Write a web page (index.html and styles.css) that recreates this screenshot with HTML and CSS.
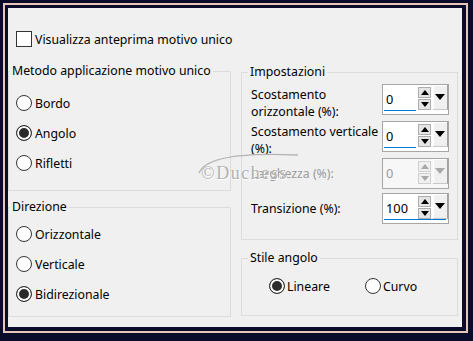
FILE: index.html
```html
<!DOCTYPE html>
<html lang="it">
<head>
    <meta charset="UTF-8">
    <title>Motivo unico</title>
    <link rel="stylesheet" href="styles.css">
</head>
<body>
    <div class="frame">
        <div class="frame-mid">
            <div class="dialog">
                <label class="check-row">
                    <span class="checkbox"></span>
                    Visualizza anteprima motivo unico
                </label>

                <div class="panes">
                    <div class="column">
                        <fieldset class="group">
                            <legend>Metodo applicazione motivo unico</legend>
                            <div class="group-body body-method">
                                <div class="radio-row"><span class="radio"></span>Bordo</div>
                                <div class="radio-row"><span class="radio checked"></span>Angolo</div>
                                <div class="radio-row"><span class="radio"></span>Rifletti</div>
                            </div>
                        </fieldset>

                        <fieldset class="group">
                            <legend>Direzione</legend>
                            <div class="group-body body-direction">
                                <div class="radio-row"><span class="radio"></span>Orizzontale</div>
                                <div class="radio-row"><span class="radio"></span>Verticale</div>
                                <div class="radio-row"><span class="radio checked"></span>Bidirezionale</div>
                            </div>
                        </fieldset>
                    </div>

                    <div class="column column-right">
                        <fieldset class="group">
                            <legend>Impostazioni</legend>
                            <div class="group-body body-settings">

                                <div class="setting">
                                    <div class="setting-label two-lines">Scostamento<br>orizzontale (%):</div>
                                    <div class="spin">
                                        <div class="spin-top">
                                            <div class="spin-field">0</div>
                                            <div class="spin-buttons">
                                                <span class="spin-btn"><span class="tri-up"></span></span>
                                                <span class="spin-btn"><span class="tri-down"></span></span>
                                            </div>
                                            <div class="spin-drop"><span class="tri-drop"></span></div>
                                        </div>
                                        <div class="spin-bar"></div>
                                    </div>
                                </div>

                                <div class="setting">
                                    <div class="setting-label two-lines">Scostamento verticale<br>(%):</div>
                                    <div class="spin">
                                        <div class="spin-top">
                                            <div class="spin-field">0</div>
                                            <div class="spin-buttons">
                                                <span class="spin-btn"><span class="tri-up"></span></span>
                                                <span class="spin-btn"><span class="tri-down"></span></span>
                                            </div>
                                            <div class="spin-drop"><span class="tri-drop"></span></div>
                                        </div>
                                        <div class="spin-bar"></div>
                                    </div>
                                </div>

                                <div class="setting disabled">
                                    <div class="setting-label">Larghezza (%):</div>
                                    <div class="spin">
                                        <div class="spin-top">
                                            <div class="spin-field">0</div>
                                            <div class="spin-buttons">
                                                <span class="spin-btn"><span class="tri-up"></span></span>
                                                <span class="spin-btn"><span class="tri-down"></span></span>
                                            </div>
                                            <div class="spin-drop"><span class="tri-drop"></span></div>
                                        </div>
                                        <div class="spin-bar"></div>
                                    </div>
                                </div>

                                <div class="setting setting-last">
                                    <div class="setting-label">Transizione (%):</div>
                                    <div class="spin">
                                        <div class="spin-top">
                                            <div class="spin-field">100</div>
                                            <div class="spin-buttons">
                                                <span class="spin-btn"><span class="tri-up"></span></span>
                                                <span class="spin-btn"><span class="tri-down"></span></span>
                                            </div>
                                            <div class="spin-drop"><span class="tri-drop"></span></div>
                                        </div>
                                        <div class="spin-bar full"></div>
                                    </div>
                                </div>
                            </div>
                        </fieldset>

                        <fieldset class="group">
                            <legend>Stile angolo</legend>
                            <div class="group-body body-corner">
                                <div class="radio-row option-first"><span class="radio checked"></span>Lineare</div>
                                <div class="radio-row"><span class="radio"></span>Curvo</div>
                            </div>
                        </fieldset>
                    </div>
                </div>

                <div class="watermark">
                    <svg width="104" height="26" viewBox="0 0 104 26">
                        <path d="M3 24 C 9 9, 40 3, 102 6" fill="none" stroke="#b4b4b4" stroke-width="1.3"/>
                    </svg>
                    <span class="watermark-text">©Duchess</span>
                </div>
            </div>
        </div>
    </div>
</body>
</html>
```

FILE: styles.css
```css
body {
    margin: 0;
    font-family: "Noto Sans", sans-serif;
    font-size: 12.3px;
    color: #000;
}

/* outer decorative frame */
.frame {
    width: 473px;
    height: 341px;
    box-sizing: border-box;
    background-color: #0b0b2c;
    padding: 3px 5px 8px 3px;
}

.frame-mid {
    height: 100%;
    box-sizing: border-box;
    background-color: #e6c6b6;
    padding: 2px;
}

.dialog {
    position: relative;
    height: 100%;
    box-sizing: border-box;
    background-color: #f0f0f0;
    border: solid #0b0b2c;
    border-width: 3px 4px 4px 3px;
    overflow: hidden;
}

.check-row {
    display: flex;
    align-items: center;
    margin: 23px 0 0 8px;
    height: 16px;
}

.checkbox {
    width: 16px;
    height: 16px;
    box-sizing: border-box;
    border: 1px solid #333;
    background-color: #fff;
    margin-right: 3px;
}

.panes {
    display: grid;
    grid-template-columns: 223px 217px;
    column-gap: 10px;
    margin-top: 15px;
}

.column {
    display: flex;
    flex-direction: column;
    gap: 7px;
}

.column-right {
    margin-top: 1px;
    gap: 9px;
}

/* group boxes */
.group {
    margin: 0;
    min-width: 0;
    border: 1px solid #dcdcdc;
    padding: 0;
}

.group legend {
    padding: 0 2px;
    margin-left: 1px;
    line-height: 18px;
}

.column-right .group legend {
    margin-left: 6px;
}

.body-method {
    padding: 8px 0 12px 7px;
}

.body-direction {
    padding: 3px 0 7px 7px;
}

.body-settings {
    padding: 3px 8px 15px 9px;
}

.body-corner {
    display: flex;
    padding: 9px 0 19px 27px;
}

/* radio buttons */
.radio-row {
    display: flex;
    align-items: center;
    height: 30px;
    white-space: nowrap;
}

.radio {
    width: 16px;
    height: 16px;
    box-sizing: border-box;
    border: 1px solid #333;
    border-radius: 50%;
    background-color: #fff;
    margin-right: 3px;
    flex-shrink: 0;
}

.radio.checked {
    background-color: #2b2b2b;
    box-shadow: inset 0 0 0 2px #fff;
}

.body-corner .radio-row {
    height: 20px;
}

.body-corner .radio {
    margin-right: 2px;
}

.option-first {
    width: 96px;
}

/* settings rows */
.setting {
    display: flex;
    justify-content: space-between;
    align-items: flex-start;
    margin-bottom: 1px;
}

.setting-label {
    line-height: 17px;
    white-space: nowrap;
    align-self: center;
}

.setting-label.two-lines {
    align-self: flex-start;
    padding-top: 2px;
}

.setting-last {
    margin-top: 4px;
    margin-bottom: 0;
}

.disabled .setting-label {
    color: #9b9b9b;
}

/* spin boxes */
.spin {
    display: flex;
    flex-direction: column;
    width: 67px;
    height: 31px;
    box-sizing: border-box;
    border: 1px solid #a6a6a6;
    background-color: #fff;
}

.spin-top {
    display: flex;
    flex: 1;
}

.spin-field {
    width: 33px;
    padding-left: 3px;
    padding-top: 2px;
    display: flex;
    align-items: center;
    box-sizing: border-box;
    font-size: 12.8px;
}

.spin-buttons {
    display: flex;
    flex-direction: column;
    gap: 1px;
    margin: 2px 2px 0 2px;
}

.spin-btn {
    display: flex;
    align-items: center;
    justify-content: center;
    width: 13px;
    height: 11px;
    box-sizing: border-box;
    border: 1px solid #adadad;
    background-color: #e5e5e5;
}

.tri-up,
.tri-down {
    width: 0;
    height: 0;
    border-left: 4px solid transparent;
    border-right: 4px solid transparent;
}

.tri-up {
    border-bottom: 5px solid #000;
}

.tri-down {
    border-top: 5px solid #000;
}

.spin-drop {
    flex: 1;
    display: flex;
    justify-content: center;
    padding-top: 9px;
    background-color: #f0f0f0;
    border-right: 1px solid #a0a0a0;
    border-bottom: 1px solid #c8c8c8;
    box-shadow: inset 1px 1px 0 #fff;
}

.tri-drop {
    width: 0;
    height: 0;
    border-left: 5px solid transparent;
    border-right: 5px solid transparent;
    border-top: 6px solid #000;
}

.spin-bar {
    width: 32px;
    height: 3px;
    margin: 0 0 3px 1px;
    background-color: #0078d7;
}

.spin-bar.full {
    width: auto;
    margin-right: 2px;
}

.disabled .spin {
    background-color: #f7f7f7;
}

.disabled .spin-field {
    color: #9b9b9b;
}

.disabled .spin-btn {
    border-color: #cfcfcf;
    background-color: #f0f0f0;
}

.disabled .tri-up {
    border-bottom-color: #a8a8a8;
}

.disabled .tri-down,
.disabled .tri-drop {
    border-top-color: #a8a8a8;
}

.disabled .spin-bar {
    background-color: transparent;
}

/* watermark over the dialog */
.watermark {
    position: absolute;
    left: 188px;
    top: 141px;
    width: 110px;
    height: 40px;
    pointer-events: none;
}

.watermark svg {
    position: absolute;
    left: 0;
    top: 0;
}

.watermark-text {
    position: absolute;
    left: 5px;
    top: 14px;
    font-family: "Liberation Serif", serif;
    font-size: 18px;
    letter-spacing: 1.5px;
    color: #b2b2b2;
    text-shadow: 1px 1px 0 #fff;
}
```
